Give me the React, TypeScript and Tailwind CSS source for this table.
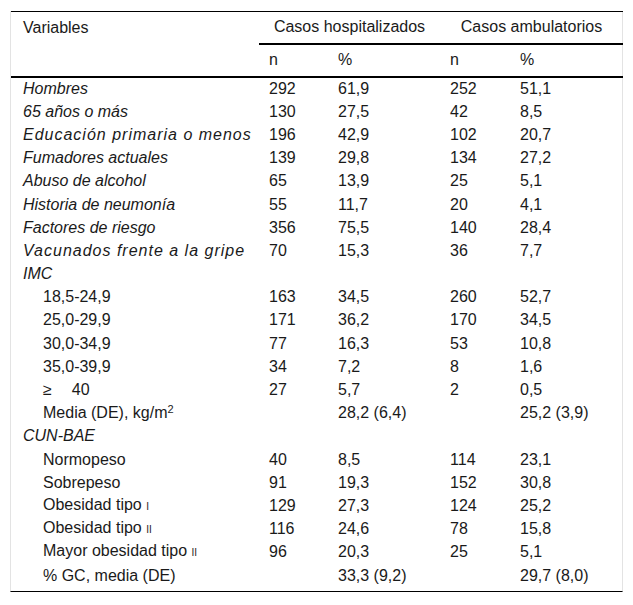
import React from 'react';

type Row = {
  label: React.ReactNode;
  italic?: boolean;
  indent?: boolean;
  wide?: boolean;
  values: [string, string, string, string];
};

const I = () => <span className="text-[10px]">I</span>;
const II = () => <span className="text-[10px]">II</span>;

const rows: Row[] = [
  { label: 'Hombres', italic: true, values: ['292', '61,9', '252', '51,1'] },
  { label: '65 años o más', italic: true, values: ['130', '27,5', '42', '8,5'] },
  { label: 'Educación primaria o menos', italic: true, wide: true, values: ['196', '42,9', '102', '20,7'] },
  { label: 'Fumadores actuales', italic: true, values: ['139', '29,8', '134', '27,2'] },
  { label: 'Abuso de alcohol', italic: true, values: ['65', '13,9', '25', '5,1'] },
  { label: 'Historia de neumonía', italic: true, values: ['55', '11,7', '20', '4,1'] },
  { label: 'Factores de riesgo', italic: true, values: ['356', '75,5', '140', '28,4'] },
  { label: 'Vacunados frente a la gripe', italic: true, wide: true, values: ['70', '15,3', '36', '7,7'] },
  { label: 'IMC', italic: true, values: ['', '', '', ''] },
  { label: '18,5-24,9', indent: true, values: ['163', '34,5', '260', '52,7'] },
  { label: '25,0-29,9', indent: true, values: ['171', '36,2', '170', '34,5'] },
  { label: '30,0-34,9', indent: true, values: ['77', '16,3', '53', '10,8'] },
  { label: '35,0-39,9', indent: true, values: ['34', '7,2', '8', '1,6'] },
  {
    label: (
      <span>
        ≥<span className="inline-block w-[20px]" />
        40
      </span>
    ),
    indent: true,
    values: ['27', '5,7', '2', '0,5'],
  },
  {
    label: (
      <span>
        Media (DE), kg/m<sup className="text-[11px]">2</sup>
      </span>
    ),
    indent: true,
    values: ['', '28,2 (6,4)', '', '25,2 (3,9)'],
  },
  { label: 'CUN-BAE', italic: true, values: ['', '', '', ''] },
  { label: 'Normopeso', indent: true, values: ['40', '8,5', '114', '23,1'] },
  { label: 'Sobrepeso', indent: true, values: ['91', '19,3', '152', '30,8'] },
  {
    label: (
      <span>
        Obesidad tipo <I />
      </span>
    ),
    indent: true,
    values: ['129', '27,3', '124', '25,2'],
  },
  {
    label: (
      <span>
        Obesidad tipo <II />
      </span>
    ),
    indent: true,
    values: ['116', '24,6', '78', '15,8'],
  },
  {
    label: (
      <span>
        Mayor obesidad tipo <II />
      </span>
    ),
    indent: true,
    values: ['96', '20,3', '25', '5,1'],
  },
  { label: '% GC, media (DE)', indent: true, values: ['', '33,3 (9,2)', '', '29,7 (8,0)'] },
];

export default function App() {
  return (
    <div
      className="w-[633px] h-[605px] bg-white pt-[11px] pl-[10px] text-[#1a1a1a]"
      style={{ fontFamily: '"Liberation Sans", Arial, sans-serif' }}
    >
      <div className="w-[613px] border-x border-[#e3e3e3] border-b border-b-black pb-[4px]">
        <table className="w-[612px] table-fixed border-collapse text-[16px]">
          <colgroup>
            <col className="w-[248px]" />
            <col className="w-[69px]" />
            <col className="w-[112px]" />
            <col className="w-[70px]" />
            <col className="w-[113px]" />
          </colgroup>
          <thead>
            <tr className="border-t border-black">
              <th rowSpan={2} className="text-left font-normal align-top pl-[12px] pt-[6px] leading-[20px]">
                Variables
              </th>
              <th colSpan={2} className="font-normal h-[32px] border-b-2 border-black leading-[20px]">
                Casos hospitalizados
              </th>
              <th colSpan={2} className="font-normal h-[32px] border-b-2 border-black leading-[20px]">
                Casos ambulatorios
              </th>
            </tr>
            <tr className="border-b-2 border-black">
              <th className="text-left font-normal pl-[10px] h-[33px] leading-[20px]">n</th>
              <th className="text-left font-normal pl-[10px] leading-[20px]">%</th>
              <th className="text-left font-normal pl-[10px] leading-[20px]">n</th>
              <th className="text-left font-normal pl-[10px] leading-[20px]">%</th>
            </tr>
          </thead>
          <tbody>
            {rows.map((r, i) => (
              <tr key={i} className="h-[23.2px]">
                <td
                  className={`p-0 pt-[1px] leading-[20px] whitespace-nowrap ${r.indent ? 'pl-[32px]' : 'pl-[12px]'} ${
                    r.italic ? 'italic' : ''
                  } ${r.wide ? 'tracking-[1px]' : ''}`}
                >
                  {r.label}
                </td>
                {r.values.map((v, j) => (
                  <td key={j} className="p-0 pt-[1px] pl-[10px] leading-[20px] whitespace-nowrap">
                    {v}
                  </td>
                ))}
              </tr>
            ))}
          </tbody>
        </table>
      </div>
    </div>
  );
}
